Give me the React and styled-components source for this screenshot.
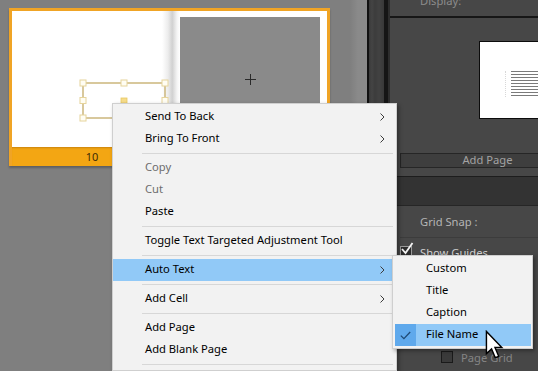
import React from "react";
import styled, { createGlobalStyle } from "styled-components";

const GlobalStyle = createGlobalStyle`
	html, body {
		margin: 0;
		padding: 0;
		background: #7f7f7f;
	}
	body {
		font-family: "Noto Sans", "Open Sans", sans-serif;
	}
`;

const mainItems = [
	{ label: "Send To Back", sub: true },
	{ label: "Bring To Front", sub: true },
	{ sep: true },
	{ label: "Copy", disabled: true },
	{ label: "Cut", disabled: true },
	{ label: "Paste" },
	{ sep: true },
	{ label: "Toggle Text Targeted Adjustment Tool" },
	{ sep: true },
	{ label: "Auto Text", sub: true, active: true },
	{ sep: true },
	{ label: "Add Cell", sub: true },
	{ sep: true },
	{ label: "Add Page" },
	{ label: "Add Blank Page" },
	{ sep: true },
];

const autoTextItems = [
	{ label: "Custom" },
	{ label: "Title" },
	{ label: "Caption" },
	{ label: "File Name", checked: true, active: true },
];

function Chevron() {
	return (
		<svg width="5" height="8" viewBox="0 0 5 8">
			<path d="M0.5 0.5 L4 4 L0.5 7.5" fill="none" stroke="#3c3c3c" strokeWidth="1" />
		</svg>
	);
}

function TextFrame() {
	const handles = [
		[71, 72], [112, 72], [153, 72],
		[71, 89.5], [153, 89.5],
		[71, 107], [112, 107], [153, 107],
	];
	return (
		<FrameSvg width="160" height="136" viewBox="0 0 160 136">
			<rect x="71" y="72" width="82" height="35" fill="none" stroke="#cbb67c" strokeWidth="1.5" />
			{handles.map(([x, y], i) => (
				<rect key={i} x={x - 3} y={y - 3} width="6" height="6" fill="#fffdf3" stroke="#e6d49c" strokeWidth="1" />
			))}
			<rect x="109" y="87" width="6" height="5" fill="#f6dc8a" stroke="#e8c862" strokeWidth="0.8" />
		</FrameSvg>
	);
}

function Cursor() {
	return (
		<CursorSvg width="20" height="30" viewBox="0 0 14 21">
			<path
				d="M1 1 L1 16.5 L4.6 13.2 L7.2 19.4 L9.6 18.4 L7 12.3 L11.8 12.3 Z"
				fill="#fff"
				stroke="#000"
				strokeWidth="1"
				strokeLinejoin="miter"
			/>
		</CursorSvg>
	);
}

function App() {
	return (
		<Screen>
			<GlobalStyle />
			<Canvas>
				<Spread>
					<Pages>
						<LeftPage>
							<TextFrame />
						</LeftPage>
						<RightPage>
							<Placeholder>
								<svg width="11" height="11" viewBox="0 0 11 11">
									<path d="M5.5 0 V11 M0 5.5 H11" stroke="#2a2a2a" strokeWidth="1" />
								</svg>
							</Placeholder>
						</RightPage>
					</Pages>
					<Band>
						<BandLabel>10</BandLabel>
					</Band>
				</Spread>
			</Canvas>
			<EdgeLine />
			<ScrollStrip />
			<PanelEdge />
			<Panel>
				<PanelHeader>
					<HeaderText>Display:</HeaderText>
				</PanelHeader>
				<HeaderRule />
				<Preview>
					<PreviewPage>
						<TextLines />
					</PreviewPage>
				</Preview>
				<AddPageButton>Add Page</AddPageButton>
				<DarkBand />
				<OptionRow $pad={30}>
					<OptionText>Grid Snap :</OptionText>
				</OptionRow>
				<SoftRule />
				<OptionRow $pad={10} $height={28}>
					<CheckBox $checked>
						<svg width="14" height="14" viewBox="0 0 14 14">
							<path d="M2 7 L5.5 11 L12.5 1" fill="none" stroke="#f4f4f4" strokeWidth="1.8" />
						</svg>
					</CheckBox>
					<OptionText $bright>Show Guides</OptionText>
				</OptionRow>
				<Spacer />
				<OptionRow $pad={51} $height={22}>
					<CheckBox />
					<OptionText $dim>Page Grid</OptionText>
				</OptionRow>
			</Panel>

			<Menu>
				{mainItems.map((item, i) =>
					item.sep ? (
						<Separator key={i} />
					) : (
						<MenuItem key={i} $active={item.active} $disabled={item.disabled}>
							<span>{item.label}</span>
							{item.sub && <Chevron />}
						</MenuItem>
					)
				)}
			</Menu>

			<SubMenu>
				{autoTextItems.map((item) => (
					<SubItem key={item.label} $active={item.active}>
						<CheckCell $checked={item.checked}>
							{item.checked && (
								<svg width="11" height="9" viewBox="0 0 11 9">
									<path d="M0.8 4.6 L3.9 7.6 L10.2 1" fill="none" stroke="#1f4a75" strokeWidth="1.3" />
								</svg>
							)}
						</CheckCell>
						<SubLabel>{item.label}</SubLabel>
					</SubItem>
				))}
			</SubMenu>

			<Cursor />
		</Screen>
	);
}

//STYLES

const Screen = styled.div`
	position: relative;
	display: flex;
	width: 538px;
	height: 371px;
	overflow: hidden;
	font-family: "Noto Sans", "Open Sans", sans-serif;
`;

const Canvas = styled.div`
	width: 358px;
	flex-shrink: 0;
	padding: 8px 0 0 9px;
	background: linear-gradient(to right, #7f7f7f 0, #7f7f7f 350px, #8a8a8a 358px);
`;

const Spread = styled.div`
	width: 315px;
	border: 3px solid #f0a425;
	border-bottom: none;
	background: #f0a425;
	box-shadow: 0 2px 2px rgba(0, 0, 0, 0.25);
`;

const Pages = styled.div`
	display: flex;
	height: 136px;
`;

const LeftPage = styled.div`
	position: relative;
	width: 160px;
	background: linear-gradient(to right, #fff 0, #fff 150px, #ececec 156px, #d2d2d2 160px);
`;

const FrameSvg = styled.svg`
	position: absolute;
	left: 0;
	top: 0;
`;

const RightPage = styled.div`
	flex: 1;
	padding: 6px 7px 6px 8px;
	background: linear-gradient(to right, #cfcfcf 0, #f4f4f4 5px, #fff 8px);
`;

const Placeholder = styled.div`
	height: 100%;
	display: flex;
	align-items: center;
	justify-content: center;
	background: #8a8a8a;
`;

const Band = styled.div`
	display: flex;
	height: 19px;
	background: #f3a613;
	box-shadow: inset 0 2px 2px -1px rgba(120, 70, 0, 0.35);
`;

const BandLabel = styled.div`
	width: 160px;
	text-align: center;
	font-size: 11px;
	line-height: 19px;
	color: #3d2b05;
`;

const EdgeLine = styled.div`
	width: 2px;
	flex-shrink: 0;
	background: #111;
`;

const ScrollStrip = styled.div`
	width: 15px;
	flex-shrink: 0;
	background: linear-gradient(
		to right,
		#3a3a3a 0,
		#444 3px,
		#3c3c3c 6px,
		#424242 10px,
		#383838 15px
	);
`;

const PanelEdge = styled.div`
	width: 4px;
	flex-shrink: 0;
	background: #151515;
	border-right: 2px solid #2d2d2d;
`;

const Panel = styled.div`
	flex: 1;
	display: flex;
	flex-direction: column;
	min-width: 0;
	overflow: hidden;
	background: #474747;
`;

const PanelHeader = styled.div`
	height: 16px;
	padding-left: 30px;
	overflow: hidden;
`;

const HeaderText = styled.div`
	margin-top: -7px;
	font-size: 11.2px;
	line-height: 16px;
	color: #8c8c8c;
`;

const HeaderRule = styled.div`
	height: 2px;
	background: #161616;
`;

const Preview = styled.div`
	height: 135px;
	padding: 23px 0 0 89px;
	box-sizing: border-box;
`;

const PreviewPage = styled.div`
	width: 80px;
	height: 78px;
	box-sizing: border-box;
	border: 1px solid #0c0c0c;
	background: #fff;
	padding: 29px 0 0 25px;
`;

const TextLines = styled.div`
	width: 60px;
	height: 26px;
	padding-left: 5px;
	border-left: 1px dotted #d8d8d8;
	background: repeating-linear-gradient(
		to bottom,
		#7a7a7a 0,
		#7a7a7a 1px,
		#fff 1px,
		#fff 3px
	);
	background-clip: content-box;
`;

const AddPageButton = styled.div`
	flex-shrink: 0;
	width: 175px;
	height: 15px;
	margin-left: 10px;
	box-sizing: border-box;
	border: 1px solid #262626;
	background: #3e3e3e;
	font-size: 11.2px;
	line-height: 12px;
	text-align: center;
	color: #a3a3a3;
`;

const DarkBand = styled.div`
	flex-shrink: 0;
	height: 28px;
	margin-top: 8px;
	border-top: 1px solid #1d1d1d;
	border-bottom: 1px solid #262626;
	background: #333;
`;

const OptionRow = styled.div`
	flex-shrink: 0;
	display: flex;
	align-items: center;
	gap: 8px;
	height: ${(p) => p.$height || 31}px;
	padding-left: ${(p) => p.$pad}px;
`;

const OptionText = styled.span`
	font-size: 11.2px;
	color: ${(p) => (p.$dim ? "#858585" : p.$bright ? "#d0d0d0" : "#b5b5b5")};
`;

const SoftRule = styled.div`
	flex-shrink: 0;
	height: 1px;
	margin-left: 10px;
	background: #3c3c3c;
`;

const CheckBox = styled.div`
	position: relative;
	width: 10px;
	height: 10px;
	flex-shrink: 0;
	border: 1px solid ${(p) => (p.$checked ? "#9a9a9a" : "#1a1a1a")};
	background: ${(p) => (p.$checked ? "#2c2c2c" : "#3a3a3a")};
	svg {
		position: absolute;
		left: -1px;
		top: -5px;
	}
`;

const Spacer = styled.div`
	flex-shrink: 0;
	height: 80px;
`;

const Menu = styled.div`
	position: absolute;
	left: 112px;
	top: 103px;
	width: 283px;
	padding: 2px 0;
	border: 1px solid #cfcfcf;
	background: #f2f2f2;
	box-shadow: 2px 2px 4px rgba(0, 0, 0, 0.35);
	font-size: 11.2px;
`;

const MenuItem = styled.div`
	display: flex;
	align-items: center;
	justify-content: space-between;
	box-sizing: border-box;
	height: 22px;
	padding: 0 11px 3px 32px;
	color: ${(p) => (p.$disabled ? "#6d6d6d" : "#000")};
	background: ${(p) => (p.$active ? "#91c9f7" : "transparent")};
	svg {
		margin-top: 3px;
	}
`;

const Separator = styled.div`
	height: 7px;
	position: relative;
	&::after {
		content: "";
		position: absolute;
		left: 29px;
		right: 3px;
		top: 3px;
		height: 1px;
		background: #d7d7d7;
	}
`;

const SubMenu = styled.div`
	position: absolute;
	left: 392px;
	top: 255px;
	width: 139px;
	padding: 2px 0;
	border: 1px solid #cfcfcf;
	background: #f2f2f2;
	box-shadow: 2px 2px 4px rgba(0, 0, 0, 0.35);
	font-size: 11.2px;
`;

const SubItem = styled.div`
	display: flex;
	align-items: center;
	height: 22px;
	margin: 0 1px 0 2px;
	background: ${(p) => (p.$active ? "#91c9f7" : "transparent")};
`;

const CheckCell = styled.div`
	display: flex;
	align-items: center;
	justify-content: center;
	width: 21px;
	height: 100%;
	background: ${(p) => (p.$checked ? "#5fa9ec" : "transparent")};
`;

const SubLabel = styled.span`
	padding-left: 10px;
	margin-top: -3px;
	color: #000;
`;

const CursorSvg = styled.svg`
	position: absolute;
	left: 485px;
	top: 330px;
`;

export default App;
